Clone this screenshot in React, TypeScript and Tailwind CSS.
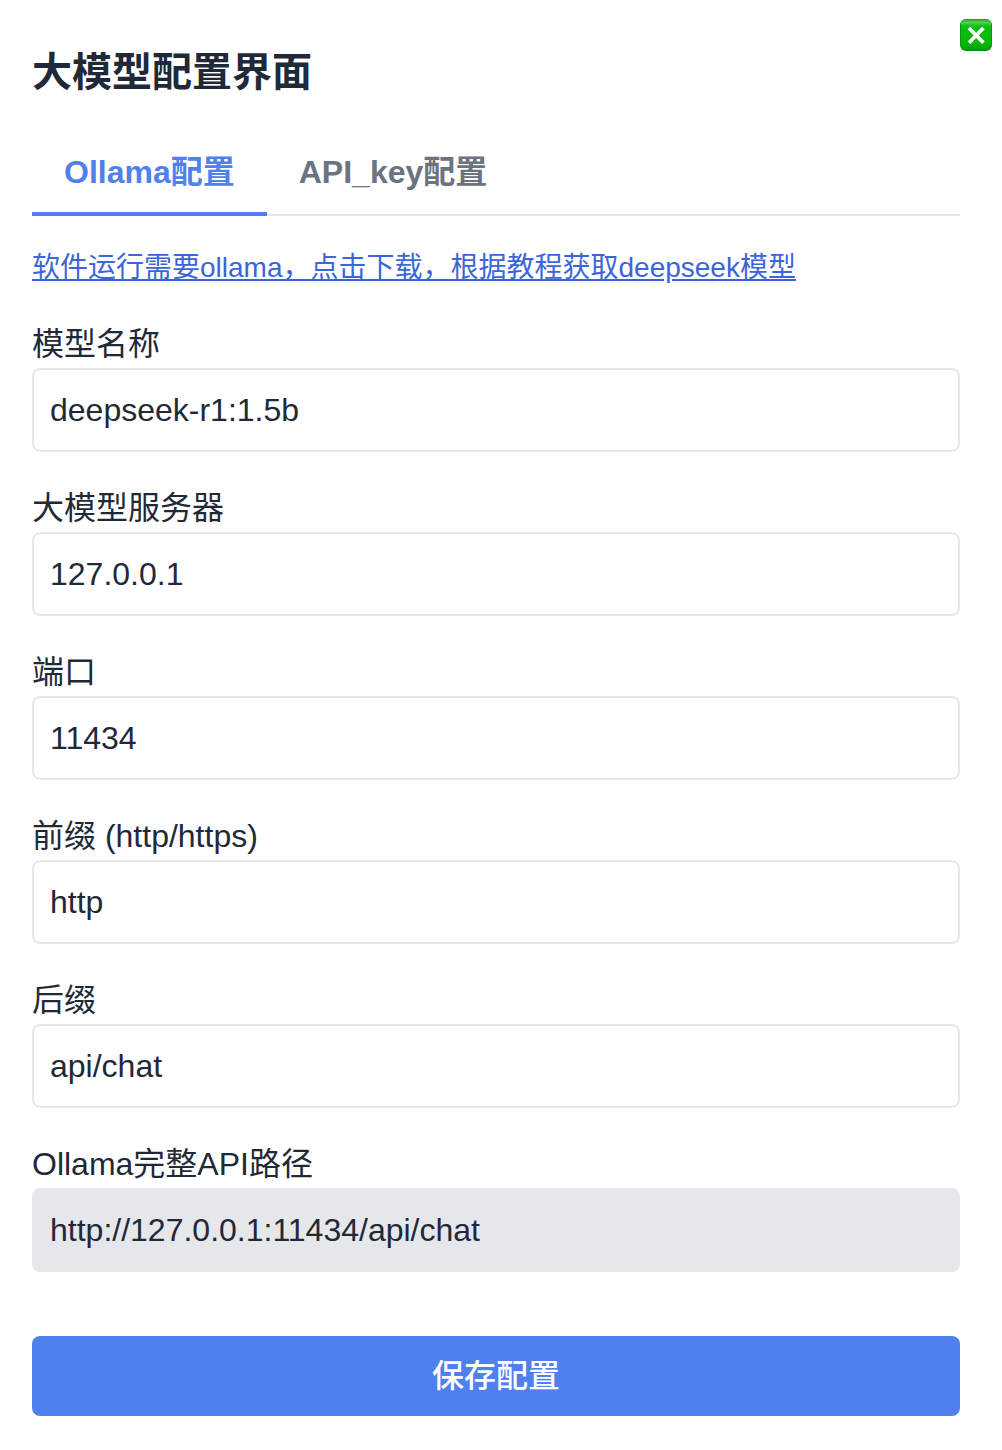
import { useState } from "react";

const tabs = ["Ollama配置", "API_key配置"];

const fields = [
  { id: "model", label: "模型名称" },
  { id: "host", label: "大模型服务器" },
  { id: "port", label: "端口" },
  { id: "prefix", label: "前缀 (http/https)" },
  { id: "suffix", label: "后缀" },
] as const;

type FieldId = (typeof fields)[number]["id"];

function CloseIcon() {
  return (
    <svg viewBox="0 0 32 32" className="size-8" aria-hidden="true">
      <defs>
        <linearGradient id="closeFill" x1="0" y1="0" x2="0" y2="1">
          <stop offset="0" stopColor="#2fae35" />
          <stop offset="0.1" stopColor="#4fd052" />
          <stop offset="0.22" stopColor="#0cc010" />
          <stop offset="0.8" stopColor="#05b808" />
          <stop offset="1" stopColor="#049a08" />
        </linearGradient>
      </defs>
      <rect width="32" height="32" rx="6" fill="#0b9412" />
      <rect x="1" y="0.5" width="30" height="30.5" rx="5" fill="url(#closeFill)" />
      <path d="M9 9l14.4 14.8M23.4 9L9 23.8" stroke="#fff" strokeWidth="3.8" />
    </svg>
  );
}

export default function App() {
  const [activeTab, setActiveTab] = useState(tabs[0]);
  const [values, setValues] = useState<Record<FieldId, string>>({
    model: "deepseek-r1:1.5b",
    host: "127.0.0.1",
    port: "11434",
    prefix: "http",
    suffix: "api/chat",
  });

  const apiPath = `${values.prefix}://${values.host}:${values.port}/${values.suffix}`;

  return (
    <main className="relative min-h-screen bg-white py-12 pr-[42px] pl-8 font-['Liberation_Sans','Noto_Sans_CJK_SC',sans-serif] text-[32px] leading-12 text-[#1f2937]">
      <button type="button" aria-label="关闭" className="absolute top-[19px] right-[10px]">
        <CloseIcon />
      </button>

      <h1 className="text-[40px] leading-12 font-bold">大模型配置界面</h1>

      <div role="tablist" className="mt-8 flex border-b-2 border-[#e5e7eb]">
        {tabs.map((tab) => (
          <button
            key={tab}
            type="button"
            role="tab"
            aria-selected={tab === activeTab}
            onClick={() => setActiveTab(tab)}
            className={
              tab === activeTab
                ? "-mb-0.5 border-b-4 border-[#4f80ed] px-8 pt-5 pb-4 font-bold text-[#4f80ed]"
                : "-mb-0.5 border-b-4 border-transparent px-8 pt-5 pb-4 font-bold text-[#6b7280]"
            }
          >
            {tab}
          </button>
        ))}
      </div>

      <a href="#download" className="mt-8 block text-[28px] leading-10 text-[#3b66d9] underline">
        软件运行需要ollama，点击下载，根据教程获取deepseek模型
      </a>

      <form className="mt-8" onSubmit={(e) => e.preventDefault()}>
        <div className="grid gap-8">
          {fields.map((field) => (
            <div key={field.id}>
              <label htmlFor={field.id} className="block">
                {field.label}
              </label>
              <input
                id={field.id}
                value={values[field.id]}
                onChange={(e) => setValues({ ...values, [field.id]: e.target.value })}
                className="block h-[84px] w-full rounded-lg border-2 border-[#e5e7eb] px-4"
              />
            </div>
          ))}
          <div>
            <label htmlFor="path" className="block">
              Ollama完整API路径
            </label>
            <input
              id="path"
              readOnly
              value={apiPath}
              className="block h-[84px] w-full rounded-lg border-2 border-[#e5e7eb] bg-[#e5e7eb] px-4"
            />
          </div>
        </div>
        <button type="submit" className="mt-16 block h-20 w-full rounded-lg bg-[#4f80ed] font-medium text-white">
          保存配置
        </button>
      </form>
    </main>
  );
}
